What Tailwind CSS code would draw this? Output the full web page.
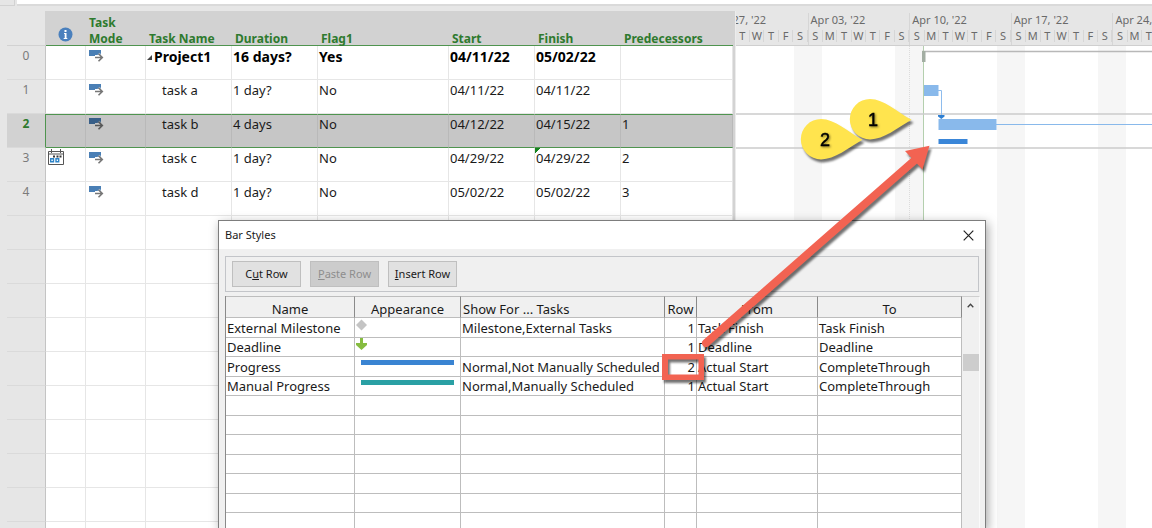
<!DOCTYPE html>
<html lang="en">
<head>
<meta charset="utf-8">
<title>Project1 - Bar Styles</title>
<script src="https://cdn.jsdelivr.net/npm/@tailwindcss/browser@4"></script>
</head>
<body class="relative flex h-screen flex-col overflow-hidden bg-[#e6e6e6] font-['Noto_Sans',sans-serif] text-[13px] text-[#1a1a1a]">

<svg class="hidden" aria-hidden="true">
  <symbol id="auto" viewBox="0 0 15 12">
    <path d="M0 0H12V5H6V6H0Z" fill="#4a7fb5"/>
    <path d="M6 7.500H13M9.500 3.700L13.300 7.500L9.500 11.300" fill="none" stroke="#fff" stroke-width="3" opacity=".6"/>
    <path d="M6 7.500H13M9.500 3.700L13.300 7.500L9.500 11.300" fill="none" stroke="#777" stroke-width="1.600"/>
  </symbol>
</svg>

<div class="flex h-[11px] shrink-0 items-start gap-[2px]">
  <div class="h-[6px] w-[15px] border-r border-b border-[#d2d2d2]"></div>
  <input aria-label="Entry bar" class="h-[6px] min-w-0 flex-1 border-b-2 border-[#dadada] bg-white">
</div>

<main class="flex min-h-0 flex-1">
  <section class="w-[733px] shrink-0 overflow-hidden pl-[7px]" aria-label="Task sheet">
    <table class="w-full table-fixed border-separate border-spacing-0 text-left [&_tbody_td]:h-[34px] [&_tbody_td]:border-r [&_tbody_td]:border-b [&_tbody_td]:border-[#e6e6e6] [&_tbody_td]:px-px [&_tbody_td]:pt-[2px] [&_tbody_td]:align-top [&_tbody_td]:leading-4 [&_tbody_td>svg]:ml-[2px] [&_tbody_th]:border-r [&_tbody_th]:border-b [&_tbody_th]:border-r-[#c4c4c4] [&_tbody_th]:border-b-[#dadada] [&_tbody_th]:pt-[2px] [&_tbody_th]:text-center [&_tbody_th]:align-top [&_tbody_th]:text-xs [&_tbody_th]:leading-4">
      <colgroup><col class="w-[39px]"><col class="w-[40px]"><col class="w-[60px]"><col class="w-[86px]"><col class="w-[86px]"><col class="w-[131px]"><col class="w-[86px]"><col class="w-[86px]"><col></colgroup>
      <thead>
        <tr class="h-[35px] align-bottom text-xs leading-4 font-bold text-[#2e7a2e] [&>th]:border-b [&>th]:border-[#4f944f] [&>th]:bg-[#d2d2d2] [&>th]:pl-[3px] [&_span]:-mb-[2px] [&_span]:block">
          <td class="border-r border-b border-[#d2d2d2]"></td>
          <th aria-label="Indicators"><svg class="mb-[3px] ml-[9px]" width="15" height="15" viewBox="0 0 15 15"><circle cx="7.500" cy="7.500" r="7" fill="#4a80bd"/><path d="M6.500 3H8.500V5H6.500ZM6 6H8.500V11H9.300V12H5.700V11H6.700V7H6Z" fill="#fff"/></svg></th>
          <th><span>Task<br>Mode</span></th><th><span>Task Name</span></th><th><span>Duration</span></th><th><span>Flag1</span></th><th><span>Start</span></th><th><span>Finish</span></th><th><span>Predecessors</span></th>
        </tr>
      </thead>
      <tbody class="bg-white [&_th]:bg-[#e6e6e6] [&_th]:font-normal [&_th]:text-[#7b7b7b]">
        <tr class="text-sm font-bold text-black [&>td]:leading-[18px]!"><th>0</th><td></td><td><svg class="mt-[2px]" width="15" height="12"><use href="#auto"/></svg></td><td><div class="flex items-center gap-[2px]"><svg width="5" height="5"><path d="M5 0V5H0Z" fill="#444"/></svg>Project1</div></td><td>16 days?</td><td>Yes</td><td>04/11/22</td><td>05/02/22</td><td></td></tr>
        <tr><th>1</th><td></td><td><svg class="mt-[2px]" width="15" height="12"><use href="#auto"/></svg></td><td><div class="pl-[15px]">task a</div></td><td>1 day?</td><td>No</td><td>04/11/22</td><td>04/11/22</td><td></td></tr>
        <tr class="[&>td]:border-y! [&>td]:border-y-[#4f944f]! [&>td]:border-r-[#b9b9b9]! [&>td]:bg-[#c6c6c6] [&>td]:pt-px! [&>th]:border-r-[#4f944f]! [&>th]:bg-[#d2d2d2]! [&>th]:font-bold! [&>th]:text-[#2e7a2e]!"><th>2</th><td></td><td><svg class="mt-[2px] brightness-75" width="15" height="12"><use href="#auto"/></svg></td><td><div class="pl-[15px]">task b</div></td><td>4 days</td><td>No</td><td>04/12/22</td><td>04/15/22</td><td>1</td></tr>
        <tr><th>3</th><td class="px-0! pt-px!"><svg width="17" height="17" viewBox="0 0 17 17" aria-label="Constraint"><path d="M.5 2.500H15.500V15.500H.5ZM.5 5H15.500M3.500 0V4M12.500 0V4" fill="#fff" stroke="#555"/><path d="M5 6.500H7V8.500H5ZM8.500 6.500H10.500V8.500H8.500ZM11.500 6.500H13.500V8.500H11.500Z" fill="#333"/><path d="M2.700 9.700H5.500V12.700H2.700ZM8 9.700H10.700V12.700H8Z" fill="#fff" stroke="#2c83c7" stroke-width="1.400"/></svg></td><td><svg class="mt-[2px]" width="15" height="12"><use href="#auto"/></svg></td><td><div class="pl-[15px]">task c</div></td><td>1 day?</td><td>No</td><td>04/29/22</td><td class="bg-[linear-gradient(135deg,#15851f_4px,transparent_4px)]">04/29/22</td><td>2</td></tr>
        <tr><th>4</th><td></td><td><svg class="mt-[2px]" width="15" height="12"><use href="#auto"/></svg></td><td><div class="pl-[15px]">task d</div></td><td>1 day?</td><td>No</td><td>05/02/22</td><td>05/02/22</td><td>3</td></tr>
        <tr><th></th><td></td><td></td><td></td><td></td><td></td><td></td><td></td><td></td></tr>
        <tr><th></th><td></td><td></td><td></td><td></td><td></td><td></td><td></td><td></td></tr>
        <tr><th></th><td></td><td></td><td></td><td></td><td></td><td></td><td></td><td></td></tr>
        <tr><th></th><td></td><td></td><td></td><td></td><td></td><td></td><td></td><td></td></tr>
        <tr><th></th><td></td><td></td><td></td><td></td><td></td><td></td><td></td><td></td></tr>
        <tr><th></th><td></td><td></td><td></td><td></td><td></td><td></td><td></td><td></td></tr>
        <tr><th></th><td></td><td></td><td></td><td></td><td></td><td></td><td></td><td></td></tr>
        <tr><th></th><td></td><td></td><td></td><td></td><td></td><td></td><td></td><td></td></tr>
        <tr><th></th><td></td><td></td><td></td><td></td><td></td><td></td><td></td><td></td></tr>
        <tr><th></th><td></td><td></td><td></td><td></td><td></td><td></td><td></td><td></td></tr>
      </tbody>
    </table>
  </section>
  <div class="w-[3px] shrink-0 border-r border-[#ececec] bg-[#d3d3d3]"></div>

  <section class="relative flex min-w-0 flex-1 flex-col overflow-hidden bg-white" aria-label="Gantt chart">
    <div class="-ml-[30px] grid h-[35px] w-[508px] shrink-0 grid-cols-5 border-b border-[#cfcfcf] bg-[#e6e6e6] pt-[2px] text-[11px] leading-[14px] text-[#6a6a6a] [&>div]:border-l [&>div]:border-[#d6d6d6] [&>div>p]:h-[17px] [&>div>p]:pl-[2px] [&>div>p]:whitespace-nowrap [&>div>div]:grid [&>div>div]:grid-cols-7 [&>div>div]:text-center [&_span]:border-r [&_span]:h-[12px] [&_span]:leading-[12px] [&_span]:border-[#d6d6d6]">
      <div><p>Mar 27, '22</p><div><span>S</span><span>M</span><span>T</span><span>W</span><span>T</span><span>F</span><span>S</span></div></div>
      <div><p>Apr 03, '22</p><div><span>S</span><span>M</span><span>T</span><span>W</span><span>T</span><span>F</span><span>S</span></div></div>
      <div><p>Apr 10, '22</p><div><span>S</span><span>M</span><span>T</span><span>W</span><span>T</span><span>F</span><span>S</span></div></div>
      <div><p>Apr 17, '22</p><div><span>S</span><span>M</span><span>T</span><span>W</span><span>T</span><span>F</span><span>S</span></div></div>
      <div><p>Apr 24, '22</p><div><span>S</span><span>M</span><span>T</span><span>W</span><span>T</span><span>F</span><span>S</span></div></div>
    </div>
    <div class="-ml-[30px] grid w-[508px] flex-1 grid-cols-5 [&>div]:flex [&>div]:justify-between [&_i]:w-[14px] [&_i]:bg-[#f6f6f6]">
      <div><i></i><i></i></div><div><i></i><i></i></div><div><i></i><i></i></div><div><i></i><i></i></div><div><i></i><i></i></div>
    </div>
    <!-- Bars, links and guide lines on the chart canvas -->
    <svg class="absolute top-[35px] left-0 h-full w-full" aria-hidden="true">
      <path d="M173.500 0V500" stroke="#dcdcdc" stroke-dasharray="1 1"/>
      <path d="M187.500 0V500" stroke="#b4cfae"/>
      <path d="M0 68H2000M0 102H2000" stroke="#cbcbcb" stroke-width="1.500"/>
      <path d="M186 5.500H2000" stroke="#b8b8b8" stroke-width="1.500"/>
      <rect x="186" y="5" width="3.500" height="11" fill="#a3aea3"/>
      <rect x="188" y="39" width="14.500" height="11" fill="#89b9eb"/>
      <path d="M202 44.500H205.500V70" fill="none" stroke="#8ebced"/>
      <path d="M202 69H208.500V70.500L205.300 73L202 70.500Z" fill="#2f7fd2"/>
      <rect x="202.500" y="73" width="58" height="11" fill="#89b9eb"/>
      <path d="M260 78.500H2000" stroke="#89b9eb"/>
      <rect x="202.500" y="93" width="29" height="5" fill="#3a86d8"/>
    </svg>
  </section>
</main>

<div role="dialog" aria-labelledby="dlg-title" class="absolute top-[220px] right-[166px] -bottom-px left-[218px] flex flex-col overflow-hidden border border-[#7d7d7d] bg-[#f0f0f0] shadow-[2px_3px_10px_rgba(0,0,0,0.35)]">
  <header class="flex h-[28px] shrink-0 items-center justify-between bg-white pr-[11px] pl-[6px] text-[11px]">
    <h1 id="dlg-title">Bar Styles</h1>
    <button aria-label="Close"><svg width="11" height="11" viewBox="0 0 11 11"><path d="M.7.7L10.300 10.300M10.300.7L.7 10.300" stroke="#222" stroke-width="1.200"/></svg></button>
  </header>
  <div class="mx-[6px] mt-[7px] flex h-[36px] shrink-0 items-center gap-[9px] border border-[#c3c5c9] px-[6px] text-[11px] [&>button]:h-[26px] [&>button]:w-[69px] [&>button]:border [&>button]:border-[#bfbfbf] [&>button]:bg-[#e1e1e1]">
    <button>C<u>u</u>t Row</button>
    <button disabled class="bg-[#cccccc]! text-[#8e8e8e]"><u>P</u>aste Row</button>
    <button><u>I</u>nsert Row</button>
  </div>
  <div class="mr-[5px] ml-[6px] mt-[4px] flex min-h-0 flex-1 items-stretch overflow-hidden">
    <div class="min-w-0 flex-1 overflow-hidden">
      <table class="w-full table-fixed border-separate border-spacing-0 border-l border-[#8a8a8a] text-left whitespace-nowrap [&_td]:border-r [&_td]:border-b [&_td]:border-[#bdbdbd] [&_td]:bg-white [&_td]:px-px [&_td]:leading-[18px] [&_th]:border-t [&_th]:border-r [&_th]:border-b [&_th]:border-[#bdbdbd] [&_th]:border-r-[#8a8a8a] [&_th]:pt-[4px] [&_th]:text-center [&_th]:leading-4 [&_th]:font-normal">
        <colgroup><col class="w-[129px]"><col class="w-[106px]"><col class="w-[204px]"><col class="w-[32px]"><col class="w-[121px]"><col></colgroup>
        <thead><tr class="h-[22px]"><th>Name</th><th>Appearance</th><th class="pl-[2px] text-left!">Show For ... Tasks</th><th>Row</th><th>From</th><th>To</th></tr></thead>
        <tbody class="[&>tr]:h-[20px] [&>tr:nth-child(even)]:h-[19px]">
          <tr><td>External Milestone</td><td><svg class="-mt-[6px]" width="11" height="12"><path d="M5.500.5L11 6L5.500 11.500L0 6Z" fill="#c4c4c4"/></svg></td><td>Milestone,External Tasks</td><td class="text-right">1</td><td>Task Finish</td><td>Task Finish</td></tr>
          <tr><td>Deadline</td><td><svg class="-mt-[6px]" width="11" height="12"><path d="M4 0H7V5H11V7L5.500 12L0 7V5H4Z" fill="#86bc40"/></svg></td><td></td><td class="text-right">1</td><td>Deadline</td><td>Deadline</td></tr>
          <tr><td>Progress</td><td><div class="mr-[5px] mb-[8px] ml-[5px] h-[5px] bg-[#3a84d2]"></div></td><td>Normal,Not Manually Scheduled</td><td class="text-right">2</td><td>Actual Start</td><td>CompleteThrough</td></tr>
          <tr><td>Manual Progress</td><td><div class="mr-[5px] mb-[8px] ml-[5px] h-[5px] bg-[#2aa0a4]"></div></td><td>Normal,Manually Scheduled</td><td class="text-right">1</td><td>Actual Start</td><td>CompleteThrough</td></tr>
          <tr><td></td><td></td><td></td><td></td><td></td><td></td></tr>
          <tr><td></td><td></td><td></td><td></td><td></td><td></td></tr>
          <tr><td></td><td></td><td></td><td></td><td></td><td></td></tr>
          <tr><td></td><td></td><td></td><td></td><td></td><td></td></tr>
          <tr><td></td><td></td><td></td><td></td><td></td><td></td></tr>
          <tr><td></td><td></td><td></td><td></td><td></td><td></td></tr>
          <tr><td></td><td></td><td></td><td></td><td></td><td></td></tr>
        </tbody>
      </table>
    </div>
    <div class="flex w-[18px] shrink-0 flex-col items-center gap-[46px] border-t border-r border-t-[#cfcfcf] border-r-[#fafafa] pt-[6px]">
      <button aria-label="Scroll up"><svg width="7" height="5" class="block"><path d="M.7 4.300L3.500 1.300L6.300 4.300" fill="none" stroke="#444" stroke-width="1.300"/></svg></button>
      <div class="h-[17px] w-[16px] bg-[#cdcdcd]"></div>
    </div>
  </div>
</div>

<!-- Callouts and arrow drawn over the windows -->
<svg class="pointer-events-none absolute top-0 left-0 drop-shadow-[2px_3px_1px_rgba(0,0,0,0.55)]" width="1152" height="528" aria-hidden="true">
  <path d="M911.500 119.800C897 112 884 99 870 99A20.200 20.200 0 0 0 870 139.400C884 139.400 897 128 911.500 119.800Z" fill="#ffe44e"/>
  <path d="M862.500 139.800C848 132 835 119 821 119A20.200 20.200 0 0 0 821 159.400C835 159.400 848 148 862.500 139.800Z" fill="#ffe44e"/>
  <path d="M706 343L915 160" stroke="#f26352" stroke-width="8" stroke-linecap="round"/>
  <path d="M929.500 145.700L905 151L922.500 169.500Z" fill="#f26352"/>
  <path fill-rule="evenodd" d="M662 354H704V380H662ZM668 359.500V374.500H698.500V359.500Z" fill="#f26352"/>
</svg>
<svg class="pointer-events-none absolute top-0 left-0 font-['Liberation_Sans',sans-serif] text-lg drop-shadow-[1px_1px_1px_rgba(0,0,0,0.5)]" width="1152" height="528">
  <g text-anchor="middle" stroke="#000" stroke-width=".5"><text x="873" y="126">1</text><text x="825" y="146">2</text></g>
</svg>
</body>
</html>
